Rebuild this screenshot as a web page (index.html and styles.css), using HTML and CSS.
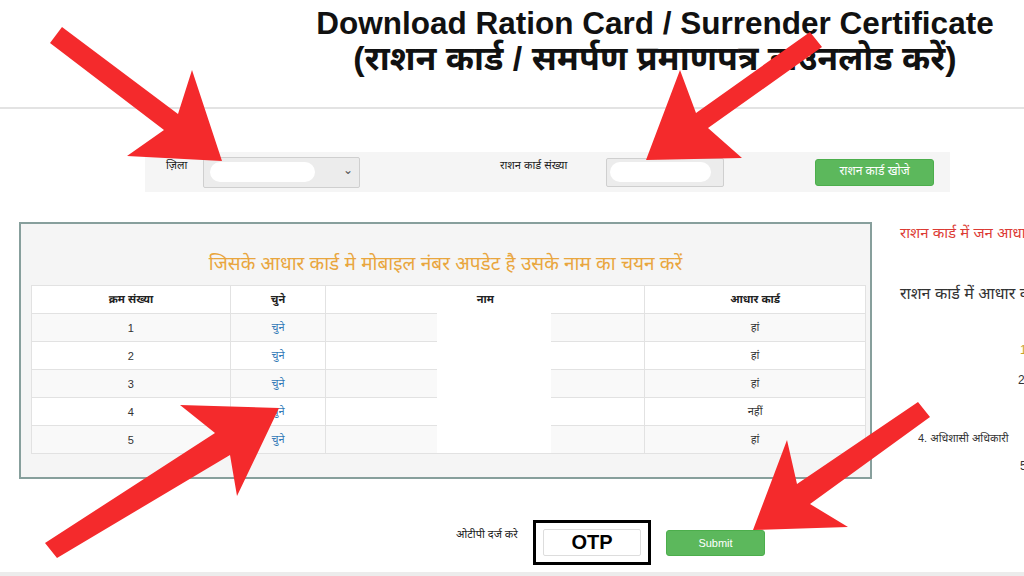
FILE: index.html
```html
<!DOCTYPE html>
<html lang="hi">
<head>
  <meta charset="UTF-8">
  <meta name="viewport" content="width=device-width, initial-scale=1.0">
  <title>Download Ration Card / Surrender Certificate</title>
  <link rel="stylesheet" href="styles.css">
</head>
<body>
<div class="page">

  <!-- Heading -->
  <h1 class="title">
    <span class="title-en">Download Ration Card / Surrender Certificate</span>
    <span class="title-hi">(राशन कार्ड / समर्पण प्रमाणपत्र डाउनलोड करें)</span>
  </h1>
  <div class="rule"></div>

  <!-- Search bar -->
  <div class="search-bar">
    <label class="lbl lbl-district">ज़िला</label>
    <div class="field field-select">
      <span class="blank"></span>
      <span class="chevron">&#8964;</span>
    </div>
    <label class="lbl lbl-card">राशन कार्ड संख्या</label>
    <div class="field field-input">
      <span class="blank"></span>
    </div>
    <button class="btn btn-search">राशन कार्ड खोजे</button>
  </div>

  <!-- Member list + side notes -->
  <div class="content">
    <div class="panel">
      <h3 class="panel-title">जिसके आधार कार्ड मे मोबाइल नंबर अपडेट है उसके नाम का चयन करें</h3>
      <div class="table-wrap">
        <table class="members">
          <thead>
            <tr><th class="c-no">क्रम संख्या</th><th class="c-pick">चुने</th><th class="c-name">नाम</th><th class="c-aadhar">आधार कार्ड</th></tr>
          </thead>
          <tbody>
            <tr><td>1</td><td><a href="#">चुने</a></td><td></td><td>हां</td></tr>
            <tr><td>2</td><td><a href="#">चुने</a></td><td></td><td>हां</td></tr>
            <tr><td>3</td><td><a href="#">चुने</a></td><td></td><td>हां</td></tr>
            <tr><td>4</td><td><a href="#">चुने</a></td><td></td><td>नहीं</td></tr>
            <tr><td>5</td><td><a href="#">चुने</a></td><td></td><td>हां</td></tr>
          </tbody>
        </table>
        <div class="redact"></div>
      </div>
    </div>

    <div class="side">
      <p class="side-red">राशन कार्ड में जन आधार</p>
      <p class="side-main">राशन कार्ड में आधार कार्ड</p>
      <p class="side-step step-1">1.</p>
      <p class="side-step step-2">2.</p>
      <p class="side-step step-4">4. अधिशासी अधिकारी</p>
      <p class="side-step step-5">5.</p>
    </div>
  </div>

  <!-- OTP -->
  <div class="otp-row">
    <label class="lbl lbl-otp">ओटीपी दर्ज करे</label>
    <div class="otp-frame">
      <div class="otp-input">OTP</div>
    </div>
    <button class="btn btn-submit">Submit</button>
  </div>
  <div class="footer-band"></div>

  <!-- red pointer arrows drawn on top -->
  <svg class="arrows" viewBox="0 0 1024 576" width="1024" height="576">
    <polygon points="62,27 178,114 192,70 222,161 127,156 164,130 50,43"/>
    <polygon points="810,32 696,113 680,70 646,160 742,158 708,128 822,47"/>
    <polygon points="45,543 215,433 180,405 279,408 237,496 230,455 57,558"/>
    <polygon points="918,402 797,484 787,440 753,530 848,527 810,504 930,417"/>
  </svg>
</div>
</body>
</html>
```

FILE: styles.css
```css
body {
  margin: 0;
  background-color: #fff;
  color: #333;
  font-family: "Liberation Sans", Arial, "Noto Sans Devanagari", "Noto Sans", sans-serif;
  overflow: hidden;
}
.page {
  position: relative;
  width: 1024px;
  height: 576px;
  overflow: hidden;
}
.title {
  margin: 0;
  padding: 6px 0 0 286px;
  text-align: center;
  font-weight: bold;
  color: #111;
}
.title-en {
  display: block;
  font-size: 31.5px;
  line-height: 34px;
}
.title-hi {
  display: block;
  font-size: 34px;
  line-height: 36px;
}
.rule {
  height: 2px;
  margin-top: 31px;
  background-color: #e3e3e3;
}

/* search bar */
.search-bar {
  display: flex;
  align-items: center;
  width: 805px;
  height: 40px;
  margin: 43px 0 0 145px;
  background-color: #f5f5f5;
}
.lbl {
  font-size: 11px;
  color: #222;
  align-self: flex-start;
  margin-top: 7px;
}
.lbl-district {
  margin-left: 21px;
  width: 37px;
}
.lbl-card {
  margin-left: 140px;
  width: 106px;
}
.field {
  position: relative;
  box-sizing: border-box;
  height: 31px;
  background-color: #ececec;
  border: 1px solid #cfcfcf;
  border-radius: 2px;
}
.field-select {
  width: 157px;
}
.field-input {
  width: 118px;
  height: 29px;
}
.blank {
  position: absolute;
  left: 6px;
  top: 4px;
  width: 105px;
  height: 20px;
  background-color: #fff;
  border-radius: 10px;
}
.field-input .blank {
  left: 3px;
  top: 3px;
  width: 101px;
}
.chevron {
  position: absolute;
  right: 6px;
  top: 5px;
  font-size: 12px;
  color: #555;
  font-family: "DejaVu Sans", sans-serif;
}
.btn {
  box-sizing: border-box;
  border: 1px solid #4cae4c;
  border-radius: 3px;
  background-color: #5cb85c;
  color: #fff;
  font-family: inherit;
  font-size: 11px;
  cursor: pointer;
}
.btn-search {
  margin-left: 91px;
  width: 119px;
  height: 27px;
  font-size: 12px;
}

/* table panel */
.content {
  display: flex;
  margin-top: 30px;
}
.panel {
  box-sizing: border-box;
  width: 853px;
  height: 257px;
  margin-left: 19px;
  padding: 20px 0 0 10px;
  background-color: #f5f5f5;
  border: 2px solid #879f9c;
  flex-shrink: 0;
}
.panel-title {
  margin: 0 0 0 -10px;
  font-size: 19px;
  font-weight: normal;
  line-height: 40px;
  color: #e9a63e;
  text-align: center;
}
.table-wrap {
  position: relative;
  width: 835px;
  margin-top: 1px;
}
.members {
  width: 835px;
  border-collapse: collapse;
  font-size: 11px;
  background-color: #fff;
}
.members th, .members td {
  border: 1px solid #e2e2e2;
  text-align: center;
  padding: 0;
  height: 27px;
}
.members th {
  font-weight: bold;
  color: #222;
}
.members tbody tr:nth-child(odd) {
  background-color: #f9f9f9;
}
.members a {
  color: #337ab7;
  text-decoration: none;
}
.c-no { width: 199px; }
.c-pick { width: 95px; }
.c-name { width: 320px; }
.c-aadhar { width: 221px; }
.redact {
  position: absolute;
  left: 406px;
  top: 28px;
  width: 114px;
  height: 140px;
  background-color: #fff;
}

/* right hand notes */
.side {
  margin-left: 28px;
  white-space: nowrap;
}
.side p {
  margin: 0;
}
.side-red {
  font-size: 15px;
  line-height: 22px;
  color: #dc3b35;
}
.side-main {
  padding-top: 38px;
  font-size: 16px;
  line-height: 24px;
  color: #333;
}
.side-step {
  font-size: 12px;
  line-height: 16px;
  color: #333;
}
.step-1 {
  margin-top: 36px !important;
  padding-left: 120px;
  color: #c9a227;
}
.step-2 {
  margin-top: 14px !important;
  padding-left: 118px;
}
.step-4 {
  margin-top: 42px !important;
  padding-left: 18px;
  font-size: 11px;
}
.step-5 {
  margin-top: 12px !important;
  padding-left: 120px;
}

/* otp */
.otp-row {
  display: flex;
  align-items: center;
  margin: 41px 0 0 456px;
}
.lbl-otp {
  width: 77px;
  margin-top: 8px;
}
.otp-frame {
  box-sizing: border-box;
  width: 118px;
  height: 45px;
  padding: 6px 7px;
  border: 3px solid #000;
}
.otp-input {
  box-sizing: border-box;
  height: 27px;
  border: 1px solid #ddd;
  border-radius: 2px;
  background-color: #fff;
  color: #000;
  font-size: 20px;
  font-weight: bold;
  line-height: 25px;
  text-align: center;
}
.btn-submit {
  margin-left: 15px;
  width: 99px;
  height: 26px;
}
.footer-band {
  height: 8px;
  margin-top: 7px;
  background-color: #ececec;
}

.arrows {
  position: absolute;
  left: 0;
  top: 0;
  pointer-events: none;
}
.arrows polygon {
  fill: #f42a2c;
}
```
